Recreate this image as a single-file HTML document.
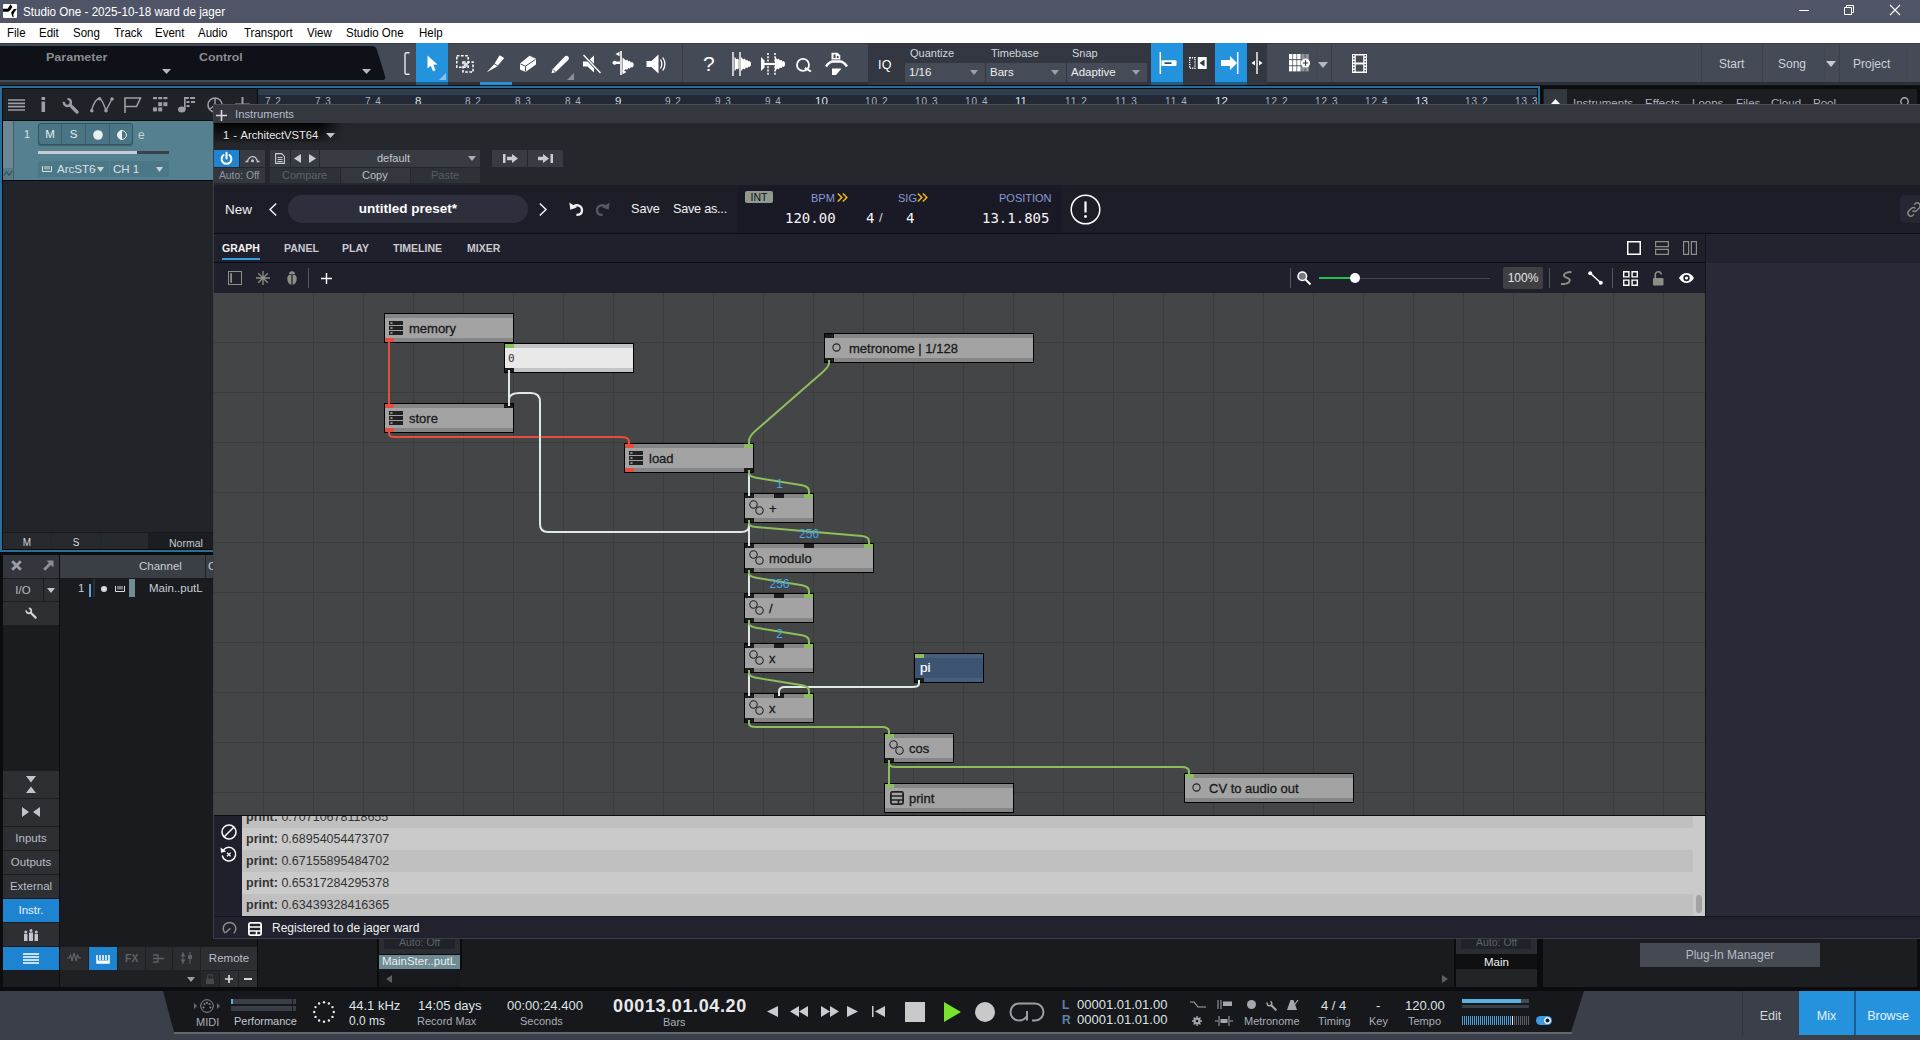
<!DOCTYPE html>
<html lang="en">
<head>
<meta charset="utf-8">
<title>Studio One - 2025-10-18 ward de jager</title>
<style>
*{box-sizing:border-box;margin:0;padding:0}
html,body{width:1920px;height:1040px;overflow:hidden;background:#191a1d;font-family:"Liberation Sans",sans-serif;font-size:12px;color:#c8ccd2}
.a{position:absolute}
.t{position:absolute;white-space:nowrap;line-height:1}
svg{position:absolute;overflow:visible}
/* ---------- window chrome ---------- */
#titlebar{left:0;top:0;width:1920px;height:23px;background:#4f5567}
#menubar{left:0;top:23px;width:1920px;height:20px;background:#fff}
#menubar .t{color:#000;font-size:12.5px;top:4px}
/* ---------- main toolbar ---------- */
#toolbar{left:0;top:43px;width:1920px;height:42px;background:#454b56;border-top:1px solid #363b44}
#understrip{left:0;top:82px;width:1920px;height:4px;background:#1b1e23}
#blueline{left:0;top:86px;width:1540px;height:3px;background:#1b6b9d}
/* ---------- arrangement ---------- */
#arr{left:0;top:89px;width:1540px;height:460px;background:#1b1e23}
#trackbar{left:3px;top:89px;width:255px;height:30px;background:#1f2227}
#ruler{left:258px;top:89px;width:1280px;height:16px;background:#27313d}
#track{left:3px;top:121px;width:211px;height:59px;background:#53808f}
/* ---------- plugin window ---------- */
#plug{left:213px;top:105px;width:1707px;height:834px;background:#24272c}
#plughead{left:0;top:0;width:1707px;height:18px;background:#34373d}
#arch{left:1px;top:80px;width:1706px;height:754px;background:#1e1e2a}
#graph{left:0;top:108px;width:1491px;height:523px;background-color:#444547;
 background-image:linear-gradient(to right,#3b3c3e 1px,transparent 1px),linear-gradient(to bottom,#3b3c3e 1px,transparent 1px);
 background-size:50px 50px;background-position:49px 49px;overflow:hidden}
/* nodes */
.n{position:absolute;height:30px;border:1px solid #000;background:linear-gradient(#868686 0 4px,#a3a3a3 4px 24px,#868686 24px 28px)}
.n .t{color:#1a1a1a;font-size:13px;top:8px;-webkit-text-stroke:.3px #1a1a1a}
.p{position:absolute;width:9px;height:4px;background:#1c1c1c}
.p.g{background:#8bbd5b}.p.r{background:#e74c3c}
.pt{top:0}.pb{top:24px}
.n.nb{background:linear-gradient(#c4c4c4 0 4px,#e9e9e9 4px 24px,#c4c4c4 24px 28px)}
.n.pi{background:linear-gradient(#465f7f 0 4px,#3c5472 4px 24px,#465f7f 24px 28px)}
.wl{width:40px;text-align:center;color:#4aa6e6;font-size:12px}
</style>
</head>
<body>
<div id="titlebar" class="a"></div>
<div id="menubar" class="a"></div>
<div id="toolbar" class="a"></div>
<div id="understrip" class="a"></div>
<div id="blueline" class="a"></div>
<div id="arr" class="a"></div>
<div id="trackbar" class="a"></div>
<div id="ruler" class="a"></div>
<div id="track" class="a"></div>
<svg style="left:3px;top:4px" width="14" height="14" viewBox="0 0 14 14"><rect x="0" y="0" width="14" height="14" rx="1" fill="#fff"/><path d="M0 4.700h4.700L7.500 0.300 9.400 3.100 7.200 6.250 5.300 7.800H0z" fill="#000"/><path d="M14 4.800l-3.400.5-2.500 3.100 1.300 4.400 1.200.6-.3-2.800 1.300-2.800z" fill="#000"/></svg>
<div class="t" style="left:23px;top:6px;font-size:12.500px;color:#fff;transform-origin:0 0;transform:scaleX(.932)">Studio One - 2025-10-18 ward de jager</div>
<svg style="left:1799px;top:10px" width="10" height="1" viewBox="0 0 10 1"><rect width="10" height="1" fill="#fff"/></svg>
<svg style="left:1844px;top:5px" width="10" height="10" viewBox="0 0 10 10"><path d="M0.500 2.500h7v7h-7zM2.500 2.500v-2h7v7h-2" fill="none" stroke="#fff" stroke-width="1"/></svg>
<svg style="left:1890px;top:5px" width="10" height="10" viewBox="0 0 10 10"><path d="M0 0l10 10M10 0L0 10" stroke="#fff" stroke-width="1.100"/></svg>
<div class="t" style="left:7px;top:27px;font-size:12.500px;color:#000;transform-origin:0 0;transform:scaleX(.92);">File</div>
<div class="t" style="left:39px;top:27px;font-size:12.500px;color:#000;transform-origin:0 0;transform:scaleX(.92);">Edit</div>
<div class="t" style="left:73px;top:27px;font-size:12.500px;color:#000;transform-origin:0 0;transform:scaleX(.92);">Song</div>
<div class="t" style="left:114px;top:27px;font-size:12.500px;color:#000;transform-origin:0 0;transform:scaleX(.92);">Track</div>
<div class="t" style="left:155px;top:27px;font-size:12.500px;color:#000;transform-origin:0 0;transform:scaleX(.92);">Event</div>
<div class="t" style="left:198px;top:27px;font-size:12.500px;color:#000;transform-origin:0 0;transform:scaleX(.92);">Audio</div>
<div class="t" style="left:244px;top:27px;font-size:12.500px;color:#000;transform-origin:0 0;transform:scaleX(.92);">Transport</div>
<div class="t" style="left:307px;top:27px;font-size:12.500px;color:#000;transform-origin:0 0;transform:scaleX(.92);">View</div>
<div class="t" style="left:346px;top:27px;font-size:12.500px;color:#000;transform-origin:0 0;transform:scaleX(.92);">Studio One</div>
<div class="t" style="left:419px;top:27px;font-size:12.500px;color:#000;transform-origin:0 0;transform:scaleX(.92);">Help</div>
<svg style="left:0px;top:46px" width="386" height="34" viewBox="0 0 386 34"><path d="M0 0H372q4 0 5 4l8 26q1 4-3 4H0z" fill="#0e1118"/></svg>
<div class="t" style="left:46px;top:52px;font-size:11.500px;font-weight:bold;color:#8a8c90;transform-origin:0 0;transform:scaleX(1.09)">Parameter</div>
<div class="t" style="left:199px;top:52px;font-size:11.500px;font-weight:bold;color:#8a8c90;transform-origin:0 0;transform:scaleX(1.07)">Control</div>
<svg style="left:162px;top:69px" width="9" height="5" viewBox="0 0 9 5"><path d="M0 0h9L4.500 5z" fill="#b3b7c0"/></svg>
<svg style="left:362px;top:69px" width="9" height="5" viewBox="0 0 9 5"><path d="M0 0h9L4.500 5z" fill="#b3b7c0"/></svg>
<div class="a" style="left:0px;top:82px;width:1920px;height:3px;background:#2c3038;"></div>
<div class="a" style="left:0px;top:85px;width:1920px;height:1px;background:#111317;"></div>
<svg style="left:404px;top:52px" width="6" height="23" viewBox="0 0 6 23"><path d="M5.500 0.800H2.500Q1 0.800 1 2.300V20.700Q1 22.200 2.500 22.200H5.500" fill="none" stroke="#e8eaee" stroke-width="1.400"/></svg>
<div class="a" style="left:416px;top:43px;width:32px;height:39px;background:#2493de;"></div>
<div class="a" style="left:416px;top:82px;width:32px;height:3px;background:#1d5f8d;"></div>
<svg style="left:427px;top:55px" width="12" height="17" viewBox="0 0 12 17"><path d="M0.500 0.500v13l3.200-2.800 2.300 5.600 2.600-1.100-2.300-5.400 4.200-.3z" fill="#fff"/></svg>
<svg style="left:439px;top:73px" width="7" height="7" viewBox="0 0 7 7"><path d="M7 0v7H0z" fill="#8fc1ea"/></svg>
<svg style="left:456px;top:55px" width="18" height="18" viewBox="0 0 18 18"><rect x="0.800" y="0.800" width="11.400" height="11.400" fill="none" stroke="#fff" stroke-width="1.500" stroke-dasharray="2.600 1.600"/><rect x="7" y="7" width="10" height="10" fill="none" stroke="#fff" stroke-width="1.500" stroke-dasharray="2.600 1.600"/><rect x="7.800" y="7.800" width="4" height="4" fill="#d9dce0"/></svg>
<svg style="left:486px;top:55px" width="19" height="18" viewBox="0 0 19 18"><path d="M13.600 0.300l4.600 2.700-6.300 7.500-3.300-2.100z" fill="#fff"/><path d="M8.200 9.250l3.300 2.050L0.700 17.200z" fill="#fff"/></svg>
<div class="a" style="left:480px;top:82px;width:32px;height:3px;background:#2493de;"></div>
<svg style="left:519px;top:55px" width="18" height="18" viewBox="0 0 18 18"><path d="M10.500 0.800l6.500 3v5.700l-10.500 7.500-5.500-2.500v-6z" fill="#fff"/><path d="M1.500 9l5 2.200 10-6.800M6.500 11.200v5.300" fill="none" stroke="#454b56" stroke-width="1"/></svg>
<svg style="left:551px;top:56px" width="18" height="18" viewBox="0 0 18 18"><path d="M13.800 0.500a2.400 2.400 0 0 1 3.400 3.400L4.500 16.200 0.500 17.300 1.600 13.300z" fill="#fff"/><path d="M2 13.500l2.600 2.600" stroke="#454b56" stroke-width="1"/></svg>
<svg style="left:567px;top:73px" width="7" height="7" viewBox="0 0 7 7"><path d="M7 0v7H0z" fill="#8a8f99"/></svg>
<svg style="left:582px;top:54px" width="19" height="20" viewBox="0 0 19 20"><path d="M1 7.500h4.500l6.500-6v17l-6.500-6H1z" fill="#fff"/><path d="M1.500 1l17 18" stroke="#454b56" stroke-width="3.200"/><path d="M1.500 1l17 18" stroke="#fff" stroke-width="1.300"/></svg>
<svg style="left:612px;top:51px" width="23" height="24" viewBox="0 0 23 24"><path d="M9 0v24" stroke="#fff" stroke-width="1.600"/><path d="M7.500 0.800v4.500l-4-2.200zM10.500 18.800v4.500l4-2.300z" fill="#fff"/><path d="M8 10.500H4.500c-1-1.200-3.500-1-4 1s2.500 3 4 1.500H8z" fill="#fff"/><path d="M10.500 6.500l3.500 3 1 -1 1.500 2 1.200-.8 1.200 1.800 1.200-.5 1.500 1.500v2.500l-1.500 1.500-1.200-.5-1.200 1.800-1.200-.8-1.500 2-1-1-3.500 3z" fill="#fff"/></svg>
<svg style="left:646px;top:54px" width="20" height="20" viewBox="0 0 20 20"><path d="M0.500 7h5l7-6.500v19l-7-6.500h-5z" fill="#fff"/><path d="M14.500 5.500c1.600 2.800 1.600 6.200 0 9M16.800 3.500c2.600 4 2.600 9 0 13" fill="none" stroke="#fff" stroke-width="1.300"/></svg>
<div class="a" style="left:682px;top:43px;width:1px;height:39px;background:#383d46;"></div>
<div class="t" style="left:703px;top:53px;font-size:21px;color:#fff">?</div>
<svg style="left:732px;top:52px" width="20" height="24" viewBox="0 0 20 24"><path d="M1 0v24M8 0v24" stroke="#fff" stroke-width="1.400"/><g transform="translate(2.500,5)"><path d="M0 0l2.500 2.500 1-1 1.500 2 1.200-.8 1.200 1.800 1.200-.5 1.400 1.500v3l-1.400 1.500-1.200-.5-1.200 1.800-1.200-.8-1.500 2-1-1L0 14z" fill="#fff"/></g><path d="M8 0v24" stroke="#454b56" stroke-width="2.600"/><path d="M8 0v24" stroke="#fff" stroke-width="1.400"/><g transform="translate(9,5)"><path d="M0 0l2.500 2.500 1-1 1.500 2 1.200-.8 1.200 1.800 1.200-.5 1.400 1.500v3l-1.400 1.500-1.200-.5-1.200 1.800-1.200-.8-1.500 2-1-1L0 14z" fill="#fff"/></g></svg>
<svg style="left:761px;top:53px" width="25" height="22" viewBox="0 0 25 22"><g transform="translate(0,4)"><path d="M0 0l3.500 3.500V10.500L0 14z" fill="#fff"/></g><g transform="translate(14,4)"><path d="M0 0l2.500 2.500 1-1 1.500 2 1.200-.8 1.200 1.800 1.200-.5 1.400 1.500v3l-1.400 1.500-1.200-.5-1.200 1.800-1.200-.8-1.500 2-1-1L0 14z" fill="#fff"/></g><path d="M7 0v22M14 0v22" stroke="#fff" stroke-width="1.500" stroke-dasharray="2 1.300"/><path d="M3 11h11" stroke="#fff" stroke-width="2.200"/></svg>
<svg style="left:796px;top:58px" width="17" height="15" viewBox="0 0 17 15"><circle cx="7" cy="6.900" r="6" fill="none" stroke="#fff" stroke-width="1.800"/><path d="M8.800 9.800l6.200 3.700" stroke="#fff" stroke-width="2"/></svg>
<svg style="left:825px;top:52px" width="24" height="24" viewBox="0 0 24 24"><path d="M6.500 0.800h6.200l2.600 2.600v4.100H6.500z" fill="#fff"/><path d="M8.500 2.500h2v3.500h-2zM11.800 4h1.700v2h-1.700z" fill="#454b56"/><path d="M1 14.500q3.500-5 7-5h7q3.500 0 7 5" fill="none" stroke="#fff" stroke-width="2.400"/><path d="M7 16.500h9.500l-5.500 6.500H7z" fill="#fff"/></svg>
<div class="a" style="left:868px;top:43px;width:283px;height:42px;background:#323741;"></div>
<div class="t" style="left:878px;top:59px;font-size:12.500px;color:#fff;letter-spacing:.3px">IQ</div>
<div class="t" style="left:910px;top:48px;font-size:11px;color:#d2d6dc">Quantize</div>
<div class="a" style="left:905px;top:63px;width:80px;height:19px;background:#464c57;"></div>
<div class="t" style="left:909px;top:67px;font-size:11.500px;color:#eceef1">1/16</div>
<svg style="left:970px;top:70px" width="8" height="5" viewBox="0 0 8 5"><path d="M0 0h8L4 5z" fill="#9ba0a9"/></svg>
<div class="t" style="left:991px;top:48px;font-size:11px;color:#d2d6dc">Timebase</div>
<div class="a" style="left:986px;top:63px;width:80px;height:19px;background:#464c57;"></div>
<div class="t" style="left:990px;top:67px;font-size:11.500px;color:#eceef1">Bars</div>
<svg style="left:1051px;top:70px" width="8" height="5" viewBox="0 0 8 5"><path d="M0 0h8L4 5z" fill="#9ba0a9"/></svg>
<div class="t" style="left:1072px;top:48px;font-size:11px;color:#d2d6dc">Snap</div>
<div class="a" style="left:1067px;top:63px;width:80px;height:19px;background:#464c57;"></div>
<div class="t" style="left:1071px;top:67px;font-size:11.500px;color:#eceef1">Adaptive</div>
<svg style="left:1132px;top:70px" width="8" height="5" viewBox="0 0 8 5"><path d="M0 0h8L4 5z" fill="#9ba0a9"/></svg>
<div class="a" style="left:1151px;top:43px;width:32px;height:39px;background:#2493de;"></div>
<div class="a" style="left:1151px;top:82px;width:32px;height:3px;background:#1d5f8d;"></div>
<div class="a" style="left:1215px;top:43px;width:32px;height:39px;background:#2493de;"></div>
<div class="a" style="left:1215px;top:82px;width:32px;height:3px;background:#1d5f8d;"></div>
<div class="a" style="left:1247px;top:43px;width:20px;height:42px;background:#323741;"></div>
<div class="a" style="left:1183px;top:43px;width:32px;height:42px;background:#323741;"></div>
<svg style="left:1159px;top:52px" width="18" height="22" viewBox="0 0 18 22"><path d="M1.300 0v22" stroke="#fff" stroke-width="1.500"/><rect x="2.500" y="8.300" width="15" height="5.700" rx="1" fill="#fff"/><rect x="5.500" y="10.300" width="7" height="1.700" fill="#14508a"/></svg>
<svg style="left:1189px;top:57px" width="18" height="12" viewBox="0 0 18 12"><rect x="0.700" y="0.700" width="5.300" height="10.600" fill="none" stroke="#fff" stroke-width="1.400" stroke-dasharray="1.200 1"/><rect x="8.800" y="0" width="8.900" height="12" fill="#fff"/><path d="M15.500 2.500v7l-5-3.500z" fill="#323741"/></svg>
<svg style="left:1221px;top:52px" width="18" height="22" viewBox="0 0 18 22"><path d="M16.700 0v22" stroke="#fff" stroke-width="1.500"/><path d="M0 8h9V4l7 7-7 7v-4H0z" fill="#fff"/></svg>
<svg style="left:1251px;top:52px" width="12" height="22" viewBox="0 0 12 22"><path d="M6 0v22" stroke="#fff" stroke-width="1.400"/><path d="M4 8.500v5L0.500 11zM8 8.500v5l3.500-2.500z" fill="#fff"/></svg>
<svg style="left:1289px;top:54px" width="22" height="18" viewBox="0 0 22 18"><rect x="0.0" y="0.0" width="3.400" height="5.200" fill="#fff"/><rect x="4.1" y="0.0" width="3.400" height="5.200" fill="#fff"/><rect x="8.2" y="0.0" width="3.400" height="5.200" fill="#fff"/><rect x="12.3" y="0.0" width="3.400" height="5.200" fill="#8f949d"/><rect x="16.4" y="0.0" width="3.400" height="5.200" fill="#8f949d"/><rect x="0.0" y="6.1" width="3.400" height="5.200" fill="#fff"/><rect x="4.1" y="6.1" width="3.400" height="5.200" fill="#fff"/><rect x="8.2" y="6.1" width="3.400" height="5.200" fill="#fff"/><rect x="12.3" y="6.1" width="3.400" height="5.200" fill="#8f949d"/><rect x="16.4" y="6.1" width="3.400" height="5.200" fill="#8f949d"/><rect x="0.0" y="12.2" width="3.400" height="5.200" fill="#fff"/><rect x="4.1" y="12.2" width="3.400" height="5.200" fill="#fff"/><rect x="8.2" y="12.2" width="3.400" height="5.200" fill="#fff"/><rect x="12.3" y="12.2" width="3.400" height="5.200" fill="#8f949d"/><rect x="16.4" y="12.2" width="3.400" height="5.200" fill="#8f949d"/><circle cx="16.500" cy="9" r="4.600" fill="#fff"/><path d="M13.800 9h5.400M16.500 6.300v5.400" stroke="#333" stroke-width="1.100"/></svg>
<div class="a" style="left:1316px;top:43px;width:1px;height:39px;background:#40454f;"></div>
<svg style="left:1318px;top:62px" width="10" height="6" viewBox="0 0 10 6"><path d="M0 0h10L5 6z" fill="#b3b7c0"/></svg>
<div class="a" style="left:1331px;top:43px;width:1px;height:39px;background:#383d46;"></div>
<svg style="left:1352px;top:54px" width="15" height="19" viewBox="0 0 15 19"><rect x="0" y="0" width="15" height="19" fill="#fff"/><rect x="3.800" y="1.500" width="7.400" height="7" fill="#454b56"/><rect x="3.800" y="10.500" width="7.400" height="7" fill="#454b56"/><path d="M1.800 1v17M13.200 1v17" stroke="#454b56" stroke-width="1.400" stroke-dasharray="1.500 1.500"/></svg>
<div class="a" style="left:1701px;top:43px;width:1px;height:39px;background:#3a3f48;"></div>
<div class="a" style="left:1762px;top:43px;width:1px;height:39px;background:#3a3f48;"></div>
<div class="a" style="left:1839px;top:43px;width:1px;height:39px;background:#3a3f48;"></div>
<div class="a" style="left:1824px;top:43px;width:1px;height:39px;background:#40454f;"></div>
<div class="a" style="left:1906px;top:43px;width:1px;height:39px;background:#40454f;"></div>
<div class="t" style="left:1719px;top:58px;font-size:12px;color:#ccd2da">Start</div>
<div class="t" style="left:1778px;top:58px;font-size:12px;color:#ccd2da">Song</div>
<svg style="left:1826px;top:61px" width="10" height="6" viewBox="0 0 10 6"><path d="M0 0h10L5 6z" fill="#c5c9d0"/></svg>
<div class="t" style="left:1853px;top:58px;font-size:12px;color:#ccd2da">Project</div>

<div class="a" style="left:0px;top:85px;width:1540px;height:468px;background:#08090a;"></div>
<div class="a" style="left:0px;top:86px;width:1540px;height:466px;background:#28709c;"></div>
<div class="a" style="left:2px;top:88px;width:1536px;height:462px;background:#08090a;"></div>
<div class="a" style="left:3px;top:89px;width:1534px;height:460px;background:#212429;"></div>
<div class="a" style="left:3px;top:89px;width:255px;height:31px;background:#1f2227;"></div>
<div class="a" style="left:3px;top:120px;width:255px;height:1px;background:#0c0d0f;"></div>
<svg style="left:8px;top:99px" width="17" height="12" viewBox="0 0 17 12"><path d="M0 1h17M0 4.300h17M0 7.700h17M0 11h17" stroke="#9b9ea4" stroke-width="1.700"/></svg>
<svg style="left:41px;top:97px" width="5" height="15" viewBox="0 0 5 15"><rect x="0.500" y="0" width="3.600" height="3" fill="#9b9ea4"/><rect x="0.500" y="4.500" width="3.600" height="10.500" fill="#9b9ea4"/></svg>
<svg style="left:62px;top:97px" width="17" height="17" viewBox="0 0 12 12"><circle cx="3.800" cy="3.800" r="2.500" fill="none" stroke="#9b9ea4" stroke-width="1.700" stroke-dasharray="8.070 3.490 4.150 0"/><path d="M5.800 5.800L10.600 10.600" stroke="#9b9ea4" stroke-width="2.300" stroke-linecap="round"/></svg>
<svg style="left:90px;top:97px" width="24" height="16" viewBox="0 0 24 16"><path d="M1.500 13.500C4 5 7 1.500 9.500 1.500c2 0 4 5 6.500 12L22 2" fill="none" stroke="#9b9ea4" stroke-width="1.500"/><circle cx="1.800" cy="13.800" r="1.800" fill="#9b9ea4"/><circle cx="9.500" cy="1.800" r="1.800" fill="#9b9ea4"/><circle cx="16" cy="13.800" r="1.800" fill="#9b9ea4"/><circle cx="22" cy="2" r="1.800" fill="#9b9ea4"/></svg>
<svg style="left:124px;top:97px" width="17" height="16" viewBox="0 0 17 16"><path d="M1 16V1h15.500l-4 8.500H1" fill="none" stroke="#9b9ea4" stroke-width="1.600"/></svg>
<svg style="left:153px;top:97px" width="15" height="15" viewBox="0 0 15 15"><rect x="0" y="0" width="4" height="2.2" fill="#9b9ea4"/><rect x="5.2" y="0" width="4" height="2.2" fill="#9b9ea4"/><rect x="10.4" y="0" width="4" height="2.2" fill="#9b9ea4"/><rect x="5.2" y="5.2" width="4" height="4" fill="#9b9ea4"/><rect x="10.4" y="5.2" width="4" height="4" fill="#9b9ea4"/><rect x="0" y="10.4" width="4" height="4" fill="#9b9ea4"/><rect x="5.2" y="10.4" width="4" height="4" fill="#9b9ea4"/></svg>
<svg style="left:178px;top:97px" width="18" height="16" viewBox="0 0 18 16"><ellipse cx="3.800" cy="12.500" rx="3.800" ry="3" fill="#9b9ea4"/><path d="M6.800 12.500V0" stroke="#9b9ea4" stroke-width="1.600"/><path d="M6.800 1h4M12 1h5M8.500 5h3M13 5h4M8.500 9h3" stroke="#9b9ea4" stroke-width="2"/></svg>
<svg style="left:207px;top:97px" width="16" height="16" viewBox="0 0 16 16"><circle cx="8" cy="8" r="7" fill="none" stroke="#9b9ea4" stroke-width="1.600"/><path d="M8 1v7l-5 4M8 8l5 4" stroke="#9b9ea4" stroke-width="1.500" fill="none"/></svg>
<svg style="left:235px;top:97px" width="15" height="15" viewBox="0 0 15 15"><path d="M7.500 0v15M0 7.500h15" stroke="#9b9ea4" stroke-width="2"/></svg>
<div class="a" style="left:257px;top:89px;width:1px;height:16px;background:#08090a;"></div>
<div class="a" style="left:258px;top:89px;width:1279px;height:6px;background:#303f4f;"></div>
<div class="a" style="left:258px;top:95px;width:1279px;height:10px;background:#232a36;"></div>
<div class="t" style="left:265px;top:97px;font-size:10px;color:#aab2bd;letter-spacing:1px">7.2</div>
<div class="t" style="left:315px;top:97px;font-size:10px;color:#aab2bd;letter-spacing:1px">7.3</div>
<div class="t" style="left:365px;top:97px;font-size:10px;color:#aab2bd;letter-spacing:1px">7.4</div>
<div class="t" style="left:415px;top:96px;font-size:11.500px;color:#dfe3e8">8</div>
<div class="t" style="left:465px;top:97px;font-size:10px;color:#aab2bd;letter-spacing:1px">8.2</div>
<div class="t" style="left:515px;top:97px;font-size:10px;color:#aab2bd;letter-spacing:1px">8.3</div>
<div class="t" style="left:565px;top:97px;font-size:10px;color:#aab2bd;letter-spacing:1px">8.4</div>
<div class="t" style="left:615px;top:96px;font-size:11.500px;color:#dfe3e8">9</div>
<div class="t" style="left:665px;top:97px;font-size:10px;color:#aab2bd;letter-spacing:1px">9.2</div>
<div class="t" style="left:715px;top:97px;font-size:10px;color:#aab2bd;letter-spacing:1px">9.3</div>
<div class="t" style="left:765px;top:97px;font-size:10px;color:#aab2bd;letter-spacing:1px">9.4</div>
<div class="t" style="left:815px;top:96px;font-size:11.500px;color:#dfe3e8">10</div>
<div class="t" style="left:865px;top:97px;font-size:10px;color:#aab2bd;letter-spacing:1px">10.2</div>
<div class="t" style="left:915px;top:97px;font-size:10px;color:#aab2bd;letter-spacing:1px">10.3</div>
<div class="t" style="left:965px;top:97px;font-size:10px;color:#aab2bd;letter-spacing:1px">10.4</div>
<div class="t" style="left:1015px;top:96px;font-size:11.500px;color:#dfe3e8">11</div>
<div class="t" style="left:1065px;top:97px;font-size:10px;color:#aab2bd;letter-spacing:1px">11.2</div>
<div class="t" style="left:1115px;top:97px;font-size:10px;color:#aab2bd;letter-spacing:1px">11.3</div>
<div class="t" style="left:1165px;top:97px;font-size:10px;color:#aab2bd;letter-spacing:1px">11.4</div>
<div class="t" style="left:1215px;top:96px;font-size:11.500px;color:#dfe3e8">12</div>
<div class="t" style="left:1265px;top:97px;font-size:10px;color:#aab2bd;letter-spacing:1px">12.2</div>
<div class="t" style="left:1315px;top:97px;font-size:10px;color:#aab2bd;letter-spacing:1px">12.3</div>
<div class="t" style="left:1365px;top:97px;font-size:10px;color:#aab2bd;letter-spacing:1px">12.4</div>
<div class="t" style="left:1415px;top:96px;font-size:11.500px;color:#dfe3e8">13</div>
<div class="t" style="left:1465px;top:97px;font-size:10px;color:#aab2bd;letter-spacing:1px">13.2</div>
<div class="t" style="left:1515px;top:97px;font-size:10px;color:#aab2bd;letter-spacing:1px">13.3</div>
<div class="a" style="left:3px;top:121px;width:211px;height:59px;background:#54808f;"></div>
<div class="a" style="left:3px;top:121px;width:10px;height:47px;background:#6c8993;"></div>
<div class="a" style="left:3px;top:168px;width:10px;height:12px;background:#587a86;"></div>
<div class="a" style="left:13px;top:121px;width:1px;height:59px;background:#3d606c;"></div>
<svg style="left:4px;top:170px" width="8" height="7" viewBox="0 0 8 7"><path d="M0 5.500L2.500 1.500 5 5.500 8 1" fill="none" stroke="#2d4650" stroke-width="1"/></svg>
<div class="t" style="left:24px;top:129px;font-size:11px;color:#d8e4e8">1</div>
<div class="a" style="left:38px;top:123px;width:95px;height:22px;background:#497584;border:1px solid #34545f;border-radius:3px;box-shadow:0 1px 1px rgba(0,0,0,.25)"></div>
<div class="a" style="left:61px;top:124px;width:1px;height:20px;background:#3a5f6b;"></div>
<div class="a" style="left:85px;top:124px;width:1px;height:20px;background:#3a5f6b;"></div>
<div class="a" style="left:109px;top:124px;width:1px;height:20px;background:#3a5f6b;"></div>
<div class="t" style="left:39px;top:129px;width:22px;text-align:center;font-size:11.500px;color:#eaf0f2">M</div>
<div class="t" style="left:62px;top:129px;width:23px;text-align:center;font-size:11.500px;color:#eaf0f2">S</div>
<svg style="left:92.5px;top:129.5px" width="10" height="10" viewBox="0 0 10 10"><circle cx="5" cy="5" r="4.800" fill="#eaf0f2"/></svg>
<svg style="left:116.5px;top:129.5px" width="10" height="10" viewBox="0 0 10 10"><circle cx="5" cy="5" r="4.400" fill="none" stroke="#eaf0f2" stroke-width="1"/><path d="M5 0.300a4.700 4.700 0 0 0 0 9.400z" fill="#eaf0f2"/></svg>
<div class="t" style="left:138px;top:129px;font-size:12px;color:#c2d4da">e</div>
<div class="a" style="left:38px;top:151px;width:131px;height:3px;background:#39414f;"></div>
<div class="a" style="left:38px;top:151px;width:99px;height:3px;background:#c6cad3;"></div>
<div class="a" style="left:3px;top:180px;width:211px;height:1px;background:#08090a;"></div>
<div class="a" style="left:38px;top:161px;width:71px;height:16px;background:#4b7787;"></div>
<div class="a" style="left:110px;top:161px;width:59px;height:16px;background:#4b7787;"></div>
<svg style="left:42px;top:166px" width="10" height="6" viewBox="0 0 10 6"><path d="M0.500 0v5.500h9V0M3 0v3.500M5 0v3.500M7 0v3.500" fill="none" stroke="#d8e2e6" stroke-width="1"/></svg>
<div class="t" style="left:57px;top:164px;font-size:11.500px;color:#d8e2e6">ArcST6</div>
<div class="t" style="left:93px;top:164px;font-size:11.500px;color:#d8e2e6">·</div>
<svg style="left:97px;top:167px" width="7" height="5" viewBox="0 0 7 5"><path d="M0 0h7L3.500 5z" fill="#c8d6db"/></svg>
<div class="t" style="left:113px;top:164px;font-size:11.500px;color:#d8e2e6">CH 1</div>
<svg style="left:156px;top:167px" width="7" height="5" viewBox="0 0 7 5"><path d="M0 0h7L3.500 5z" fill="#c8d6db"/></svg>
<div class="a" style="left:3px;top:532px;width:210px;height:1px;background:#17191d;"></div>
<div class="a" style="left:3px;top:533px;width:48px;height:16px;background:#27292d;"></div>
<div class="a" style="left:52px;top:533px;width:48px;height:16px;background:#27292d;"></div>
<div class="a" style="left:101px;top:533px;width:47px;height:16px;background:#27292d;"></div>
<div class="a" style="left:148px;top:533px;width:66px;height:16px;background:#1b1d21;"></div>
<div class="t" style="left:3px;top:538px;width:48px;text-align:center;font-size:10px;color:#d5d9df">M</div>
<div class="t" style="left:52px;top:538px;width:48px;text-align:center;font-size:10px;color:#d5d9df">S</div>
<div class="t" style="left:169px;top:538px;font-size:10.500px;color:#c5cad2">Normal</div>
<div class="a" style="left:0px;top:552px;width:1920px;height:3px;background:#0b0c0e;"></div>
<div class="a" style="left:0px;top:555px;width:1540px;height:432px;background:#1a1b1e;"></div>
<div class="a" style="left:0px;top:555px;width:3px;height:432px;background:#0b0c0e;"></div>
<div class="a" style="left:3px;top:555px;width:56px;height:432px;background:#1b1c1f;"></div>
<div class="a" style="left:59px;top:555px;width:1px;height:432px;background:#0b0c0e;"></div>
<div class="a" style="left:3px;top:555px;width:56px;height:23px;background:#33373d;"></div>
<svg style="left:11px;top:560px" width="11" height="11" viewBox="0 0 11 11"><path d="M1.200 1.200l8.600 8.600M9.800 1.200l-8.600 8.600" stroke="#9b9ea4" stroke-width="2.800"/></svg>
<svg style="left:43px;top:560px" width="11" height="11" viewBox="0 0 11 11"><path d="M3.500 0.500h7V7.500z" fill="#8c8f95"/><path d="M1.200 9.800L7.500 3.500" stroke="#8c8f95" stroke-width="3"/></svg>
<div class="a" style="left:3px;top:579px;width:40px;height:22px;background:#2d2f33;"></div>
<div class="a" style="left:44px;top:579px;width:15px;height:22px;background:#2d2f33;"></div>
<div class="t" style="left:3px;top:585px;width:40px;text-align:center;font-size:11.500px;color:#b9bec6">I/O</div>
<svg style="left:47px;top:588px" width="8" height="5" viewBox="0 0 8 5"><path d="M0 0h8L4 5z" fill="#c0c4cb"/></svg>
<div class="a" style="left:3px;top:602px;width:56px;height:23px;background:#2d2f33;"></div>
<svg style="left:25px;top:607px" width="12" height="12" viewBox="0 0 12 12"><circle cx="3.800" cy="3.800" r="2.500" fill="none" stroke="#d0d3d8" stroke-width="1.700" stroke-dasharray="8.070 3.490 4.150 0"/><path d="M5.800 5.800L10.600 10.600" stroke="#d0d3d8" stroke-width="2.300" stroke-linecap="round"/></svg>
<div class="a" style="left:60px;top:555px;width:145px;height:23px;background:#3a3e45;"></div>
<div class="a" style="left:205px;top:555px;width:1px;height:23px;background:#202226;"></div>
<div class="a" style="left:206px;top:555px;width:8px;height:23px;background:#3a3e45;"></div>
<div class="t" style="left:139px;top:561px;font-size:11.500px;color:#c8ced6">Channel</div>
<div class="t" style="left:208px;top:561px;font-size:11.500px;color:#c8ced6">C</div>
<div class="t" style="left:78px;top:583px;font-size:11.500px;color:#c8ced6">1</div>
<div class="a" style="left:89px;top:584px;width:2px;height:13px;background:#5fa8dc;"></div>
<div class="a" style="left:93px;top:579px;width:2px;height:18px;background:#2c2f34;"></div>
<svg style="left:100.5px;top:585.5px" width="6" height="6" viewBox="0 0 6 6"><circle cx="3" cy="3" r="3" fill="#d8dade"/></svg>
<svg style="left:115px;top:586px" width="10" height="6" viewBox="0 0 10 6"><path d="M0.500 0v5.500h9V0M3 0v3.500M5 0v3.500M7 0v3.500" fill="none" stroke="#d8dade" stroke-width="1"/></svg>
<div class="a" style="left:129px;top:579px;width:6px;height:18px;background:#6f8b94;"></div>
<div class="t" style="left:149px;top:583px;font-size:11.500px;color:#c8ced6">Main..putL</div>
<div class="a" style="left:3px;top:771px;width:56px;height:27px;background:#2d2f33;"></div>
<div class="a" style="left:3px;top:799px;width:56px;height:27px;background:#2d2f33;"></div>
<div class="a" style="left:3px;top:827px;width:56px;height:23px;background:#2d2f33;"></div>
<div class="a" style="left:3px;top:851px;width:56px;height:23px;background:#2d2f33;"></div>
<div class="a" style="left:3px;top:875px;width:56px;height:23px;background:#2d2f33;"></div>
<div class="a" style="left:3px;top:923px;width:56px;height:23px;background:#2d2f33;"></div>
<div class="a" style="left:3px;top:899px;width:56px;height:23px;background:#1e84d2;"></div>
<div class="a" style="left:3px;top:947px;width:56px;height:23px;background:#1e84d2;"></div>
<svg style="left:25px;top:776px" width="12" height="17" viewBox="0 0 12 17"><path d="M1 0h10L6 6.500zM1 17h10L6 10.500z" fill="#c0c4cb"/></svg>
<svg style="left:22px;top:807px" width="18" height="10" viewBox="0 0 18 10"><path d="M0 0v10l7-5zM18 0v10l-7-5z" fill="#c0c4cb"/></svg>
<div class="t" style="left:3px;top:833px;width:56px;text-align:center;font-size:11.500px;color:#b9bec6">Inputs</div>
<div class="t" style="left:3px;top:857px;width:56px;text-align:center;font-size:11.500px;color:#b9bec6">Outputs</div>
<div class="t" style="left:3px;top:881px;width:56px;text-align:center;font-size:11.500px;color:#b9bec6">External</div>
<div class="t" style="left:3px;top:905px;width:56px;text-align:center;font-size:11.500px;color:#e6f0fa">Instr.</div>
<svg style="left:24px;top:929px" width="14" height="12" viewBox="0 0 14 12"><path d="M0 5h3.500v7H0zM5 3.500h4V12H5zM10.500 5H14v7h-3.500z" fill="#c0c4cb"/><circle cx="1.750" cy="3" r="1.500" fill="#c0c4cb"/><circle cx="7" cy="1.500" r="1.500" fill="#c0c4cb"/><circle cx="12.250" cy="3" r="1.500" fill="#c0c4cb"/></svg>
<svg style="left:23px;top:953px" width="16" height="11" viewBox="0 0 16 11"><path d="M0 1h16M0 4h16M0 7h16M0 10h16" stroke="#fff" stroke-width="1.600"/></svg>
<div class="a" style="left:60px;top:947px;width:197px;height:40px;background:#1f2024;"></div>
<div class="a" style="left:60px;top:947px;width:28px;height:23px;background:#2a2c30;"></div>
<div class="a" style="left:118px;top:947px;width:27px;height:23px;background:#2a2c30;"></div>
<div class="a" style="left:146px;top:947px;width:26px;height:23px;background:#2a2c30;"></div>
<div class="a" style="left:173px;top:947px;width:27px;height:23px;background:#2a2c30;"></div>
<div class="a" style="left:201px;top:947px;width:56px;height:23px;background:#2d2f33;"></div>
<div class="a" style="left:89px;top:947px;width:28px;height:23px;background:#1e84d2;"></div>
<svg style="left:67px;top:953px" width="14" height="10" viewBox="0 0 14 10"><path d="M0 5h2l1.500-3 1.500 6 2-8 2 8 1.500-6L12 5h2" fill="none" stroke="#5d6168" stroke-width="1.200"/></svg>
<svg style="left:97px;top:955px" width="12" height="8" viewBox="0 0 12 8"><path d="M0 0v8h12V0M3 0v5M6 0v5M9 0v5" fill="none" stroke="#fff" stroke-width="1.500"/><rect x="0" y="5.500" width="12" height="2.500" fill="#fff"/></svg>
<div class="t" style="left:125px;top:953px;font-size:10.500px;color:#5d6168;font-weight:bold">FX</div>
<svg style="left:153px;top:954px" width="11" height="9" viewBox="0 0 11 9"><path d="M0 1h5v7H0M0 4.500h11" fill="none" stroke="#5d6168" stroke-width="1.300"/></svg>
<svg style="left:180px;top:952px" width="13" height="12" viewBox="0 0 13 12"><path d="M3 0v12M10 0v12" stroke="#5d6168" stroke-width="1"/><path d="M0.500 4.500L3 1l2.500 3.500zM0.500 7.500L3 11l2.500-3.500z" fill="#5d6168"/><rect x="8" y="3" width="4" height="4" rx="1" fill="#5d6168"/></svg>
<div class="t" style="left:201px;top:953px;width:56px;text-align:center;font-size:11.500px;color:#b9bec6">Remote</div>
<svg style="left:187px;top:977px" width="8" height="5" viewBox="0 0 8 5"><path d="M0 0h8L4 5z" fill="#9b9ea4"/></svg>
<div class="a" style="left:201px;top:971px;width:18px;height:16px;background:#26282c;"></div>
<div class="a" style="left:220px;top:971px;width:18px;height:16px;background:#2d2f33;"></div>
<div class="a" style="left:239px;top:971px;width:18px;height:16px;background:#2d2f33;"></div>
<svg style="left:206px;top:974px" width="8" height="10" viewBox="0 0 8 10"><path d="M1.500 4.500V3a2.500 2.500 0 0 1 5 0" fill="none" stroke="#45484e" stroke-width="1.200"/><rect x="0" y="4.500" width="8" height="5.500" fill="#45484e"/></svg>
<svg style="left:225px;top:975px" width="8" height="8" viewBox="0 0 8 8"><path d="M4 0v8M0 4h8" stroke="#d8dade" stroke-width="1.700"/></svg>
<svg style="left:244px;top:978px" width="8" height="2" viewBox="0 0 8 2"><rect width="8" height="2" fill="#d8dade"/></svg>
<div class="a" style="left:257px;top:555px;width:1px;height:432px;background:#0b0c0e;"></div>
<div class="a" style="left:377px;top:939px;width:2px;height:48px;background:#0b0c0e;"></div>
<div class="a" style="left:379px;top:939px;width:81px;height:48px;background:#18191c;"></div>
<div class="a" style="left:379px;top:939px;width:81px;height:15px;background:#2a2e33;"></div>
<div class="a" style="left:384px;top:936px;width:71px;height:13px;background:#1f2226;border-radius:2px"></div>
<div class="t" style="left:399px;top:937px;font-size:10.500px;color:#5d636c">Auto: Off</div>
<div class="a" style="left:379px;top:954px;width:81px;height:1px;background:#0b0c0e;"></div>
<div class="a" style="left:379px;top:955px;width:81px;height:14px;background:#6f8b94;"></div>
<div class="t" style="left:382px;top:956px;font-size:11.500px;color:#e8eef0">MainSter..putL</div>
<div class="a" style="left:460px;top:939px;width:2px;height:31px;background:#0b0c0e;"></div>
<svg style="left:386px;top:975px" width="6" height="8" viewBox="0 0 6 8"><path d="M6 0v8L0 4z" fill="#5b5f66"/></svg>
<svg style="left:1442px;top:975px" width="6" height="8" viewBox="0 0 6 8"><path d="M0 0v8l6-4z" fill="#5b5f66"/></svg>
<div class="a" style="left:1454px;top:939px;width:2px;height:48px;background:#0b0c0e;"></div>
<div class="a" style="left:1456px;top:939px;width:81px;height:48px;background:#222528;"></div>
<div class="a" style="left:1456px;top:939px;width:81px;height:15px;background:#2a2e33;"></div>
<div class="a" style="left:1461px;top:936px;width:70px;height:13px;background:#1f2226;border-radius:2px"></div>
<div class="t" style="left:1476px;top:937px;font-size:10.500px;color:#5d636c">Auto: Off</div>
<div class="a" style="left:1456px;top:954px;width:81px;height:15px;background:#0f1012;"></div>
<div class="t" style="left:1456px;top:957px;width:81px;text-align:center;font-size:11.500px;color:#f2f2f2">Main</div>
<div class="a" style="left:1540px;top:86px;width:3px;height:901px;background:#0b0c0e;"></div>
<div class="a" style="left:1537px;top:552px;width:3px;height:435px;background:#0b0c0e;"></div>
<div class="a" style="left:1543px;top:89px;width:374px;height:898px;background:#1c1d20;"></div>
<div class="a" style="left:1917px;top:86px;width:3px;height:901px;background:#0b0c0e;"></div>
<div class="a" style="left:1540px;top:86px;width:380px;height:3px;background:#0b0c0e;"></div>
<div class="a" style="left:1544px;top:89px;width:23px;height:16px;background:#33373e;"></div>
<svg style="left:1551px;top:99px" width="9" height="5" viewBox="0 0 9 5"><path d="M0 5h9L4.500 0z" fill="#fff"/></svg>
<div class="t" style="left:1573px;top:98px;font-size:11.500px;color:#aab1bb">Instruments</div>
<div class="t" style="left:1645px;top:98px;font-size:11.500px;color:#aab1bb">Effects</div>
<div class="t" style="left:1692px;top:98px;font-size:11.500px;color:#aab1bb">Loops</div>
<div class="t" style="left:1736px;top:98px;font-size:11.500px;color:#aab1bb">Files</div>
<div class="t" style="left:1771px;top:98px;font-size:11.500px;color:#aab1bb">Cloud</div>
<div class="t" style="left:1813px;top:98px;font-size:11.500px;color:#aab1bb">Pool</div>
<svg style="left:1900px;top:97px" width="10" height="10" viewBox="0 0 10 10"><circle cx="4.500" cy="4.500" r="3.700" fill="none" stroke="#aab1bb" stroke-width="1.400"/></svg>
<div class="a" style="left:1640px;top:943px;width:180px;height:24px;background:#454a52;"></div>
<div class="t" style="left:1640px;top:949px;width:180px;text-align:center;font-size:12px;color:#b4bac3">Plug-In Manager</div>
<div class="a" style="left:0px;top:987px;width:1920px;height:4px;background:#0b0c0e;"></div>

<!--BOTTOM-->
<div id="plug" class="a">
 <div id="plughead" class="a"></div>
 
 <div class="a" style="left:0;top:-1px;width:1707px;height:1px;background:#4a4f58"></div>
 <div class="a" style="left:0;top:0;width:1px;height:834px;background:#3c3f45"></div>
 <svg style="left:3px;top:5px" width="11" height="11" viewBox="0 0 11 11"><path d="M5.5 0v11M0 5.500h11" stroke="#d6d9de" stroke-width="1.6" fill="none"/></svg>
 <div class="t" style="left:22px;top:4px;font-size:11.300px;color:#b4bbc6">Instruments</div>
 <div class="a" style="left:1px;top:18px;width:131px;height:21px;background:linear-gradient(to right,rgba(0,0,0,0) 0,rgba(0,0,0,0) 80%,#24272c 100%),linear-gradient(#000 0,#0d0e10 30%,#1b1d21 80%,#24272c 100%)"></div>
 <div class="t" style="left:10px;top:25px;font-size:11.200px;color:#ececec;text-shadow:0 1px 1px #000;word-spacing:1px">1 - ArchitectVST64</div>
 <svg style="left:113px;top:28px" width="9" height="5"><path d="M0 0h9L4.500 5z" fill="#c0c4cb"/></svg>
 <!-- row 1 -->
 <div class="a" style="left:1px;top:45px;width:25px;height:17px;background:#1e84d2"></div>
 <svg style="left:7px;top:47px" width="13" height="13" viewBox="0 0 13 13"><path d="M3.600 3A4.900 4.900 0 1 0 9.400 3M6.500 0.800v5.700" stroke="#fff" stroke-width="2" fill="none" stroke-linecap="round"/></svg>
 <div class="a" style="left:27px;top:45px;width:25px;height:17px;background:#383c42"></div>
 <svg style="left:32px;top:49px" width="15" height="9" viewBox="0 0 15 9"><path d="M0.500 7.500h2.200A4.800 4.800 0 0 1 12.300 7.500h2.200" stroke="#c9cdd3" stroke-width="1.300" fill="none"/><circle cx="7.500" cy="6.800" r="1.500" fill="#c9cdd3"/></svg>
 <div class="a" style="left:57px;top:45px;width:20px;height:17px;background:#383c42"></div>
 <svg style="left:62px;top:48px" width="10" height="11" viewBox="0 0 10 11"><path d="M0.600 0.600h6l2.800 2.800v7h-8.800zM2.500 4.500h5M2.500 6.500h5M2.500 8.500h5" stroke="#c9cdd3" stroke-width="1.100" fill="none"/></svg>
 <div class="a" style="left:78px;top:45px;width:28px;height:17px;background:#383c42"></div>
 <svg style="left:81px;top:49px" width="22" height="9" viewBox="0 0 22 9"><path d="M7 0v9L0 4.500zM15 0v9l7-4.500z" fill="#c9cdd3"/></svg>
 <div class="a" style="left:107px;top:45px;width:160px;height:17px;background:#383c42"></div>
 <div class="t" style="left:164px;top:48px;font-size:11px;color:#c3c8cf">default</div>
 <svg style="left:255px;top:51px" width="8" height="5"><path d="M0 0h8L4 5z" fill="#a9aeb6"/></svg>
 <div class="a" style="left:279px;top:45px;width:35px;height:17px;background:#383c42"></div>
 <svg style="left:290px;top:49px" width="15" height="9" viewBox="0 0 15 9"><path d="M0 0h2.500v9H0zM4 2.800h5V0l6 4.500-6 4.500V6.200H4z" fill="#c9cdd3"/></svg>
 <div class="a" style="left:315px;top:45px;width:35px;height:17px;background:#383c42"></div>
 <svg style="left:325px;top:49px" width="15" height="9" viewBox="0 0 15 9"><path d="M12.500 0H15v9h-2.500zM0 2.800h5V0l6 4.500-6 4.500V6.200H0z" fill="#c9cdd3"/></svg>
 <!-- row 2 -->
 <div class="a" style="left:1px;top:63px;width:51px;height:15px;background:#34383e"></div>
 <div class="t" style="left:6px;top:66px;font-size:10.300px;color:#8f97a3">Auto: Off</div>
 <div class="a" style="left:57px;top:63px;width:70px;height:15px;background:#2e3237"></div>
 <div class="t" style="left:69px;top:65px;font-size:11px;color:#5b626d">Compare</div>
 <div class="a" style="left:128px;top:63px;width:69px;height:15px;background:#34383e"></div>
 <div class="t" style="left:149px;top:65px;font-size:11px;color:#b9bfc8">Copy</div>
 <div class="a" style="left:198px;top:63px;width:69px;height:15px;background:#2e3237"></div>
 <div class="t" style="left:218px;top:65px;font-size:11px;color:#555c66">Paste</div>
<!--PLUGHEAD-->
 <div id="arch" class="a">
  
  <div class="a" style="left:0;top:0;width:1706px;height:48px;background:#1d1d28"></div>
  <div class="a" style="left:523px;top:0;width:325px;height:48px;background:#1a1a26"></div>
  <div class="a" style="left:0;top:48px;width:1706px;height:1px;background:#0c0c10"></div>
  <div class="a" style="left:0;top:49px;width:1491px;height:28px;background:#1f202b"></div>
  <div class="a" style="left:0;top:77px;width:1491px;height:1px;background:#0c0c10"></div>
  <div class="a" style="left:0;top:78px;width:1491px;height:30px;background:#1f202b"></div>
  <div class="a" style="left:1491px;top:49px;width:1px;height:705px;background:#15151c"></div>
  <div class="a" style="left:1492px;top:49px;width:214px;height:682px;background:#282a37"></div>
  <div class="a" style="left:1492px;top:49px;width:214px;height:29px;background:#22232e"></div>
  <div class="t" style="left:11px;top:18px;font-size:13.5px;color:#f0f0f0">New</div>
  <svg style="left:55px;top:18px" width="8" height="13" viewBox="0 0 8 13"><path d="M7.200 0.500L1 6.500l6.200 6" stroke="#f0f0f0" stroke-width="1.500" fill="none"/></svg>
  <div class="a" style="left:74px;top:10px;width:240px;height:28px;border-radius:14px;background:#2e2f3d"></div>
  <div class="t" style="left:74px;top:17px;width:240px;text-align:center;font-size:13.5px;font-weight:bold;color:#fff">untitled preset*</div>
  <svg style="left:325px;top:18px" width="8" height="13" viewBox="0 0 8 13"><path d="M0.800 0.500L7 6.500l-6.200 6" stroke="#f0f0f0" stroke-width="1.500" fill="none"/></svg>
  <svg style="left:355px;top:17px" width="15" height="14" viewBox="0 0 15 14"><path d="M0.400 0.600l0.900 7.200 6.600-2.400z" fill="#f0f0f0"/><path d="M4.600 4.400C8.400 1.800 13 4.200 13 8.200 13 11 10.800 12.900 7.400 12.900" fill="none" stroke="#f0f0f0" stroke-width="2.300"/></svg>
  <svg style="left:381px;top:17px" width="15" height="14" viewBox="0 0 15 14"><g transform="translate(15,0) scale(-1,1)"><path d="M0.400 0.600l0.900 7.200 6.600-2.400z" fill="#55565f"/><path d="M4.600 4.400C8.400 1.800 13 4.200 13 8.200 13 11 10.800 12.900 7.400 12.900" fill="none" stroke="#55565f" stroke-width="2.300"/></g></svg>
  <div class="t" style="left:417px;top:18px;font-size:12.700px;color:#f0f0f0">Save</div>
  <div class="t" style="left:459px;top:18px;font-size:12.700px;letter-spacing:-.25px;color:#f0f0f0">Save as...</div>
  <div class="a" style="left:531px;top:6px;width:28px;height:12px;border-radius:2px;background:#8f9a8f"></div>
  <div class="t" style="left:531px;top:7px;width:28px;text-align:center;font-size:10.5px;color:#111">INT</div>
  <div class="t" style="left:597px;top:8px;font-size:11px;color:#8b9bd8">BPM</div>
  <svg style="left:623px;top:8px" width="11" height="9" viewBox="0 0 11 9"><path d="M0.800 0.500l4 4-4 4M5.800 0.500l4 4-4 4" stroke="#eab71f" stroke-width="1.600" fill="none"/></svg>
  <div class="t" style="left:571px;top:26px;font:14px 'DejaVu Sans Mono','Liberation Mono',monospace;color:#f4f4f4;line-height:1">120.00</div>
  <div class="t" style="left:684px;top:8px;font-size:11px;color:#8b9bd8">SIG</div>
  <svg style="left:703px;top:8px" width="11" height="9" viewBox="0 0 11 9"><path d="M0.800 0.500l4 4-4 4M5.800 0.500l4 4-4 4" stroke="#eab71f" stroke-width="1.600" fill="none"/></svg>
  <div class="t" style="left:652px;top:26px;font:14px 'DejaVu Sans Mono','Liberation Mono',monospace;color:#f4f4f4;line-height:1">4</div>
  <div class="t" style="left:665px;top:26px;font:13px 'Liberation Sans',sans-serif;color:#d8d8d8;line-height:1">/</div>
  <div class="t" style="left:692px;top:26px;font:14px 'DejaVu Sans Mono','Liberation Mono',monospace;color:#f4f4f4;line-height:1">4</div>
  <div class="t" style="left:785px;top:8px;font-size:11px;color:#8b9bd8">POSITION</div>
  <div class="t" style="left:768px;top:26px;font:14px 'DejaVu Sans Mono','Liberation Mono',monospace;color:#f4f4f4;line-height:1">13.1.805</div>
  <svg style="left:856px;top:9px" width="31" height="31" viewBox="0 0 31 31"><circle cx="15.500" cy="15.500" r="14.300" stroke="#fff" stroke-width="1.500" fill="none"/><path d="M15.500 7.500v11" stroke="#fff" stroke-width="2.200"/><circle cx="15.500" cy="22.500" r="1.400" fill="#fff"/></svg>
  <div class="a" style="left:1686px;top:10px;width:30px;height:28px;border-radius:5px;background:#262734"></div>
  <svg style="left:1693px;top:18px" width="14" height="13" viewBox="0 0 14 13"><path d="M5.500 7.500a3 3 0 0 0 4.200 0l2.800-2.800a3 3 0 0 0-4.200-4.200l-1.200 1.200M8.500 5.500a3 3 0 0 0-4.200 0l-2.800 2.800a3 3 0 0 0 4.200 4.200l1.200-1.200" stroke="#8a8f86" stroke-width="1.400" fill="none"/></svg>
  <!-- tabs -->
  <div class="t" style="left:8px;top:58px;font-size:10.5px;font-weight:bold;color:#f2f2f2">GRAPH</div>
  <div class="a" style="left:8px;top:73px;width:38px;height:1.500px;background:#3d9be4"></div>
  <div class="t" style="left:70px;top:58px;font-size:10.5px;font-weight:bold;color:#c9c9cf">PANEL</div>
  <div class="t" style="left:128px;top:58px;font-size:10.5px;font-weight:bold;color:#c9c9cf">PLAY</div>
  <div class="t" style="left:179px;top:58px;font-size:10.5px;font-weight:bold;color:#c9c9cf">TIMELINE</div>
  <div class="t" style="left:253px;top:58px;font-size:10.5px;font-weight:bold;color:#c9c9cf">MIXER</div>

  <!-- graph toolbar -->
  <svg style="left:14px;top:86px" width="14" height="14" viewBox="0 0 14 14"><rect x="0.500" y="0.500" width="13" height="13" fill="none" stroke="#8b9087" stroke-width="1"/><rect x="2.200" y="2.200" width="1.800" height="9.600" fill="#8b9087"/></svg>
  <svg style="left:42px;top:86px" width="14" height="14" viewBox="0 0 14 14"><path d="M7 0v14M0 7h14M2.200 2.200l9.600 9.600M11.800 2.200l-9.600 9.600" stroke="#8b9087" stroke-width="1.300"/></svg>
  <svg style="left:72.5px;top:86px" width="10" height="14" viewBox="0 0 10 14"><path d="M2 3.200a3 3 0 0 1 6 0zM0.300 7.500c0-2 .8-3.200 1.700-3.600h2.400v9.900C1.800 13.500.3 11 .3 7.500zM9.700 7.500c0-2-.8-3.200-1.700-3.600H5.600v9.900c2.600-.3 4.100-2.800 4.100-6.300z" fill="#8b9087"/></svg>
  <div class="a" style="left:94px;top:83px;width:1px;height:20px;background:#55575c"></div>
  <svg style="left:107px;top:88px" width="11" height="11" viewBox="0 0 11 11"><path d="M5.500 0v11M0 5.500h11" stroke="#fff" stroke-width="1.400"/></svg>
  <div class="a" style="left:1076px;top:83px;width:1px;height:20px;background:#55575c"></div>
  <svg style="left:1083px;top:86px" width="14" height="14" viewBox="0 0 14 14"><circle cx="5.300" cy="5.300" r="4.300" fill="#77797c" stroke="#fff" stroke-width="1.500"/><path d="M8.500 8.500l5 5" stroke="#fff" stroke-width="2"/></svg>
  <div class="a" style="left:1105px;top:92.5px;width:171px;height:1px;background:#46474c"></div>
  <div class="a" style="left:1105px;top:92px;width:36px;height:2px;background:#1fc24f"></div>
  <div class="a" style="left:1136px;top:88px;width:10px;height:10px;border-radius:5px;background:#fff"></div>
  <div class="a" style="left:1289px;top:82px;width:40px;height:22px;border-radius:2px;background:#404043"></div>
  <div class="t" style="left:1289px;top:87px;width:40px;text-align:center;font-size:12px;color:#e4e4e4">100%</div>
  <div class="a" style="left:1335px;top:83px;width:1px;height:20px;background:#55575c"></div>
  <svg style="left:1346px;top:86px" width="13" height="14" viewBox="0 0 13 14"><path d="M11.500 1C7 .8 3.500 2.600 4 4.800 4.600 7.400 10 6.500 9.800 9.400 9.600 12 5.500 13.400 1 13" stroke="#8b9087" stroke-width="1.900" fill="none"/></svg>
  <svg style="left:1374px;top:86px" width="15" height="14" viewBox="0 0 15 14"><path d="M2 2l11 10" stroke="#fff" stroke-width="1.500"/><circle cx="2.200" cy="2.200" r="2" fill="#fff"/><circle cx="12.800" cy="11.800" r="2" fill="#fff"/></svg>
  <div class="a" style="left:1398px;top:83px;width:1px;height:20px;background:#55575c"></div>
  <svg style="left:1408.5px;top:85.5px" width="15" height="15" viewBox="0 0 15 15"><path d="M0.700 0.700h5.200v5.200H0.700zM9.100 0.700h5.200v5.200H9.100zM0.700 9.100h5.200v5.200H0.700zM9.100 9.100h5.200v5.200H9.100z" stroke="#fff" stroke-width="1.400" fill="none"/></svg>
  <svg style="left:1438.5px;top:85.5px" width="11" height="15" viewBox="0 0 11 15"><path d="M2.300 7V4a3 3 0 0 1 6-.5" stroke="#8b9087" stroke-width="1.600" fill="none"/><rect x="0" y="7" width="10.500" height="7.500" rx="1" fill="#8b9087"/></svg>
  <svg style="left:1464.5px;top:88px" width="15" height="10" viewBox="0 0 15 10"><path d="M0 5C2 1.500 4.700 0 7.500 0S13 1.500 15 5c-2 3.500-4.700 5-7.500 5S2 8.500 0 5z" fill="#fff"/><circle cx="7.500" cy="5" r="3.200" fill="#1f202b"/><circle cx="7.500" cy="5" r="1.600" fill="#fff"/></svg>
  <!-- layout icons -->
  <svg style="left:1413px;top:56px" width="14" height="14" viewBox="0 0 14 14"><rect x="0.750" y="0.750" width="12.500" height="12.500" fill="none" stroke="#fff" stroke-width="1.500"/></svg>
  <svg style="left:1441px;top:56px" width="14" height="14" viewBox="0 0 14 14"><path d="M0.600 0.600h12.800v5H0.600zM0.600 8.400h12.800v5H0.600z" fill="none" stroke="#8b9087" stroke-width="1.200"/></svg>
  <svg style="left:1469px;top:56px" width="14" height="14" viewBox="0 0 14 14"><path d="M0.600 0.600h5v12.800h-5zM8.400 0.600h5v12.800h-5z" fill="none" stroke="#8b9087" stroke-width="1.200"/></svg>
<!--ARCHTOP-->
  <div id="graph" class="a">
  <div class="n" style="left:170px;top:20px;width:130px"><i class="p pb r" style="left:0px;width:9px"></i><svg style="left:4px;top:7px" width="14" height="14" viewBox="0 0 14 14"><path d="M0 0h14v4H0zM0 5h14v4H0zM0 10h14v4H0z" fill="#222"/><path d="M1.500 1.200h2v1.600h-2zM1.500 6.200h2v1.600h-2zM1.500 11.200h2v1.600h-2z" fill="#b9b9b9"/></svg><div class="t" style="left:24px;">memory</div></div>
<div class="n" style="left:170px;top:110px;width:130px"><i class="p pt r" style="left:0px;width:9px"></i><i class="p pt " style="left:119px;width:9px"></i><i class="p pb r" style="left:0px;width:9px"></i><svg style="left:4px;top:7px" width="14" height="14" viewBox="0 0 14 14"><path d="M0 0h14v4H0zM0 5h14v4H0zM0 10h14v4H0z" fill="#222"/><path d="M1.500 1.200h2v1.600h-2zM1.500 6.200h2v1.600h-2zM1.500 11.200h2v1.600h-2z" fill="#b9b9b9"/></svg><div class="t" style="left:24px;">store</div></div>
<div class="n" style="left:410px;top:150px;width:130px"><i class="p pt r" style="left:0px;width:9px"></i><i class="p pt g" style="left:119px;width:9px"></i><i class="p pb r" style="left:0px;width:9px"></i><i class="p pb " style="left:119px;width:9px"></i><svg style="left:4px;top:7px" width="14" height="14" viewBox="0 0 14 14"><path d="M0 0h14v4H0zM0 5h14v4H0zM0 10h14v4H0z" fill="#222"/><path d="M1.500 1.200h2v1.600h-2zM1.500 6.200h2v1.600h-2zM1.500 11.200h2v1.600h-2z" fill="#b9b9b9"/></svg><div class="t" style="left:24px;">load</div></div>
<div class="n" style="left:610px;top:40px;width:210px"><i class="p pt " style="left:0px;width:9px"></i><i class="p pb " style="left:0px;width:9px"></i><svg style="left:7px;top:9px" width="9" height="9" viewBox="0 0 9 9"><circle cx="4.500" cy="4.500" r="3.600" fill="none" stroke="#222" stroke-width="1.100"/></svg><div class="t" style="left:24px;">metronome | 1/128</div></div>
<div class="n" style="left:530px;top:200px;width:70px"><i class="p pt " style="left:0px;width:9px"></i><i class="p pt " style="left:29px;width:10px"></i><i class="p pt g" style="left:59px;width:9px"></i><i class="p pb " style="left:0px;width:9px"></i><svg style="left:4px;top:6px" width="15" height="15" viewBox="0 0 15 15"><circle cx="4.500" cy="4.500" r="3.700" fill="none" stroke="#222" stroke-width="1.100"/><circle cx="10.500" cy="10.500" r="3.700" fill="none" stroke="#222" stroke-width="1.100"/></svg><div class="t" style="left:24px;">+</div></div>
<div class="n" style="left:530px;top:250px;width:130px"><i class="p pt " style="left:0px;width:9px"></i><i class="p pt " style="left:59px;width:10px"></i><i class="p pt g" style="left:119px;width:9px"></i><i class="p pb " style="left:0px;width:9px"></i><svg style="left:4px;top:6px" width="15" height="15" viewBox="0 0 15 15"><circle cx="4.500" cy="4.500" r="3.700" fill="none" stroke="#222" stroke-width="1.100"/><circle cx="10.500" cy="10.500" r="3.700" fill="none" stroke="#222" stroke-width="1.100"/></svg><div class="t" style="left:24px;">modulo</div></div>
<div class="n" style="left:530px;top:300px;width:70px"><i class="p pt " style="left:0px;width:9px"></i><i class="p pt " style="left:29px;width:10px"></i><i class="p pt g" style="left:59px;width:9px"></i><i class="p pb " style="left:0px;width:9px"></i><svg style="left:4px;top:6px" width="15" height="15" viewBox="0 0 15 15"><circle cx="4.500" cy="4.500" r="3.700" fill="none" stroke="#222" stroke-width="1.100"/><circle cx="10.500" cy="10.500" r="3.700" fill="none" stroke="#222" stroke-width="1.100"/></svg><div class="t" style="left:24px;">/</div></div>
<div class="n" style="left:530px;top:350px;width:70px"><i class="p pt " style="left:0px;width:9px"></i><i class="p pt " style="left:29px;width:10px"></i><i class="p pt g" style="left:59px;width:9px"></i><i class="p pb " style="left:0px;width:9px"></i><svg style="left:4px;top:6px" width="15" height="15" viewBox="0 0 15 15"><circle cx="4.500" cy="4.500" r="3.700" fill="none" stroke="#222" stroke-width="1.100"/><circle cx="10.500" cy="10.500" r="3.700" fill="none" stroke="#222" stroke-width="1.100"/></svg><div class="t" style="left:24px;">x</div></div>
<div class="n" style="left:530px;top:400px;width:70px"><i class="p pt " style="left:0px;width:9px"></i><i class="p pt " style="left:29px;width:10px"></i><i class="p pt g" style="left:59px;width:9px"></i><i class="p pb " style="left:0px;width:9px"></i><svg style="left:4px;top:6px" width="15" height="15" viewBox="0 0 15 15"><circle cx="4.500" cy="4.500" r="3.700" fill="none" stroke="#222" stroke-width="1.100"/><circle cx="10.500" cy="10.500" r="3.700" fill="none" stroke="#222" stroke-width="1.100"/></svg><div class="t" style="left:24px;">x</div></div>
<div class="n" style="left:670px;top:440px;width:70px"><i class="p pt g" style="left:0px;width:9px"></i><i class="p pb " style="left:0px;width:9px"></i><svg style="left:4px;top:6px" width="15" height="15" viewBox="0 0 15 15"><circle cx="4.500" cy="4.500" r="3.700" fill="none" stroke="#222" stroke-width="1.100"/><circle cx="10.500" cy="10.500" r="3.700" fill="none" stroke="#222" stroke-width="1.100"/></svg><div class="t" style="left:24px;">cos</div></div>
<div class="n" style="left:670px;top:490px;width:130px"><i class="p pt g" style="left:0px;width:9px"></i><svg style="left:5px;top:7px" width="14" height="14" viewBox="0 0 14 14"><rect x="0.900" y="0.900" width="12.200" height="12.200" rx="1.500" fill="none" stroke="#222" stroke-width="1.800"/><path d="M1 5h12M1 9h12M8.500 9v4" stroke="#222" stroke-width="1.600"/></svg><div class="t" style="left:24px;">print</div></div>
<div class="n" style="left:970px;top:480px;width:170px"><i class="p pt g" style="left:0px;width:9px"></i><svg style="left:7px;top:9px" width="9" height="9" viewBox="0 0 9 9"><circle cx="4.500" cy="4.500" r="3.600" fill="none" stroke="#222" stroke-width="1.100"/></svg><div class="t" style="left:24px;">CV to audio out</div></div>
<div class="n nb" style="left:290px;top:50px;width:130px"><i class="p pt g" style="left:0;width:9px"></i><i class="p pb" style="left:0;width:9px"></i><div class="t" style="left:3px;top:9px;font:11px 'DejaVu Sans Mono','Liberation Mono',monospace;line-height:1;color:#333;-webkit-text-stroke:0">0</div></div>
<div class="n pi" style="left:700px;top:360px;width:70px"><i class="p pt g" style="left:0;width:9px"></i><i class="p pb" style="left:0;width:9px"></i><div class="t" style="left:5px;top:7px;color:#fff;font-size:13.500px;-webkit-text-stroke:.2px #fff">pi</div></div>
<svg style="left:0;top:0" width="1491" height="522" fill="none" stroke-width="2"><path d="M175 47L175 113" stroke="#e74c3c"/><path d="M175 137L175.0 140.5Q175 144 181.0 144.0L407.0 144.0Q415 144 415.0 148.5L415 153" stroke="#e74c3c"/><path d="M295 77L295 113" stroke="#dfe9e6"/><path d="M535 227L535.0 233.0Q535 239 527.0 239.0L334.0 239.0Q326 239 326.0 231.0L326.0 109.0Q326 100 317.0 100.0L306.0 100.0Q295 100 295.0 106.5L295 113" stroke="#dfe9e6"/><path d="M535 177L535 203" stroke="#dfe9e6"/><path d="M535 227L535 253" stroke="#dfe9e6"/><path d="M535 277L535 303" stroke="#dfe9e6"/><path d="M535 327L535 353" stroke="#dfe9e6"/><path d="M535 377L535 403" stroke="#dfe9e6"/><path d="M705 387L705.0 390.5Q705 394 698.0 394.0L571.0 394.0Q565 394 565.0 398.5L565 403" stroke="#dfe9e6"/><path d="M615 67L615.0 70.25Q615 73.5 608.23 79.43L541.77 137.57Q535 143.5 535.0 148.25L535 153" stroke="#8cbe5c"/><path d="M535 177L535.0 180.25Q535 183.5 541.9 184.65L588.1 192.35Q595 193.5 595.0 198.25L595 203" stroke="#8cbe5c"/><path d="M535 227L535.0 230.25Q535 233.5 541.98 234.08L648.02 242.92Q655 243.5 655.0 248.25L655 253" stroke="#8cbe5c"/><path d="M535 277L535.0 280.25Q535 283.5 541.9 284.65L588.1 292.35Q595 293.5 595.0 298.25L595 303" stroke="#8cbe5c"/><path d="M535 327L535.0 330.25Q535 333.5 541.9 334.65L588.1 342.35Q595 343.5 595.0 348.25L595 353" stroke="#8cbe5c"/><path d="M535 377L535.0 380.25Q535 383.5 541.9 384.65L588.1 392.35Q595 393.5 595.0 398.25L595 403" stroke="#8cbe5c"/><path d="M535 427L535.0 430.5Q535 434 542.0 434.0L668.0 434.0Q675 434 675.0 438.5L675 443" stroke="#8cbe5c"/><path d="M675 467L675 493" stroke="#8cbe5c"/><path d="M675 467L675.0 470.5Q675 474 682.0 474.0L968.0 474.0Q975 474 975.0 478.5L975 483" stroke="#8cbe5c"/></svg>
<div class="t wl" style="left:545.5px;top:184.5px">1</div><div class="t wl" style="left:575px;top:234.5px">256</div><div class="t wl" style="left:545.5px;top:284.5px">256</div><div class="t wl" style="left:545.5px;top:334.5px">2</div>
  </div>
  <div class="a" style="left:0;top:630px;width:1491px;height:1px;background:#0c0c10"></div>
<div class="a" style="left:0;top:631px;width:28px;height:100px;background:#1f202b"></div>
<div class="a" id="console" style="left:28px;top:631px;width:1463px;height:100px;background:#cacaca;overflow:hidden">
 <div class="a" style="left:0;top:-10px;width:1451px;height:22px;background:#c0c0c0"><div class="t" style="left:4px;top:5px;font-size:12.500px;color:#333"><b>print:</b> 0.70710678118655</div></div>
 <div class="a" style="left:0;top:12px;width:1451px;height:22px;background:#cacaca"><div class="t" style="left:4px;top:5px;font-size:12.500px;color:#333"><b>print:</b> 0.68954054473707</div></div>
 <div class="a" style="left:0;top:34px;width:1451px;height:22px;background:#c0c0c0"><div class="t" style="left:4px;top:5px;font-size:12.500px;color:#333"><b>print:</b> 0.67155895484702</div></div>
 <div class="a" style="left:0;top:56px;width:1451px;height:22px;background:#cacaca"><div class="t" style="left:4px;top:5px;font-size:12.500px;color:#333"><b>print:</b> 0.65317284295378</div></div>
 <div class="a" style="left:0;top:78px;width:1451px;height:22px;background:#c0c0c0"><div class="t" style="left:4px;top:5px;font-size:12.500px;color:#333"><b>print:</b> 0.63439328416365</div></div>
 <div class="a" style="left:1454px;top:79px;width:6px;height:18px;border-radius:3px;background:#a2a2a2"></div>
</div>
<svg style="left:7px;top:638.5px" width="16" height="16" viewBox="0 0 16 16"><circle cx="8" cy="8" r="7" fill="none" stroke="#fff" stroke-width="1.500"/><path d="M3.200 12.800L12.800 3.200" stroke="#fff" stroke-width="1.500"/></svg>
<svg style="left:6px;top:661px" width="17" height="17" viewBox="0 0 17 17"><path d="M3.300 4.200A6.800 6.800 0 1 1 2.200 9.500" fill="none" stroke="#fff" stroke-width="1.500"/><path d="M0.500 1.500l.6 5.200 5-1.300z" fill="#fff"/><path d="M7 6.800l3.600 3.600M10.600 6.800L7 10.400" stroke="#fff" stroke-width="1.300"/></svg>
<div class="a" style="left:0;top:731px;width:1706px;height:23px;background:#21222d;border-top:1px solid #14141b;border-bottom:1px solid #3a3c48"></div>
<svg style="left:7.5px;top:736px" width="15" height="15" viewBox="0 0 15 15"><path d="M3.200 12.300A6.300 6.300 0 1 1 11.800 12.300" fill="none" stroke="#8b9087" stroke-width="1.500"/><path d="M3.500 11.800l4.800-4.600" stroke="#8b9087" stroke-width="1.500"/></svg>
<svg style="left:34px;top:736.5px" width="14" height="14" viewBox="0 0 14 14"><rect x="0.900" y="0.900" width="12.200" height="12.200" rx="1.500" fill="none" stroke="#fff" stroke-width="1.800"/><path d="M1 5h12M1 9h12M8.500 9v4" stroke="#fff" stroke-width="1.600"/></svg>
<div class="t" style="left:58px;top:737px;font-size:12px;color:#f0f0f0">Registered to de jager ward</div>

 </div>
</div>
<div class="a" style="left:0px;top:991px;width:1920px;height:49px;background:#3b3f49;"></div>
<svg style="left:0px;top:991px" width="1920" height="41" viewBox="0 0 1920 41"><path d="M163 0H1584L1571 41H174z" fill="#16181b"/></svg>
<div class="a" style="left:174px;top:1032px;width:1398px;height:1.5px;background:#62666e;"></div>
<svg style="left:194px;top:999px" width="26" height="14" viewBox="0 0 26 14"><circle cx="13" cy="7" r="6.300" fill="none" stroke="#8a8e95" stroke-width="1"/><circle cx="9.500" cy="8.500" r="1" fill="#8a8e95"/><circle cx="10.500" cy="5" r="1" fill="#8a8e95"/><circle cx="13" cy="3.800" r="1" fill="#8a8e95"/><circle cx="15.500" cy="5" r="1" fill="#8a8e95"/><circle cx="16.500" cy="8.500" r="1" fill="#8a8e95"/><path d="M0 4v6l3-3zM23 4v6l3-3z" fill="#6a6e75"/></svg>
<div class="t" style="left:196px;top:1017px;font-size:11px;color:#a9aeb6">MIDI</div>
<div class="a" style="left:231px;top:999px;width:65px;height:5px;background:#3a3e46;"></div>
<div class="a" style="left:231px;top:1006px;width:65px;height:5px;background:#3a3e46;"></div>
<div class="a" style="left:231px;top:999px;width:1.5px;height:5px;background:#5ab0e0;"></div>
<div class="a" style="left:292px;top:999px;width:1px;height:5px;background:#16181b;"></div>
<div class="a" style="left:292px;top:1006px;width:1px;height:5px;background:#16181b;"></div>
<div class="t" style="left:234px;top:1016px;font-size:11px;color:#c3c8cf">Performance</div>
<svg style="left:313px;top:1001px" width="22" height="22" viewBox="0 0 22 22"><circle cx="20.80" cy="11.00" r="1.200" fill="#e8eaed"/><circle cx="19.49" cy="15.90" r="1.200" fill="#e8eaed"/><circle cx="15.90" cy="19.49" r="1.200" fill="#e8eaed"/><circle cx="11.00" cy="20.80" r="1.200" fill="#e8eaed"/><circle cx="6.10" cy="19.49" r="1.200" fill="#e8eaed"/><circle cx="2.51" cy="15.90" r="1.200" fill="#e8eaed"/><circle cx="1.20" cy="11.00" r="1.200" fill="#e8eaed"/><circle cx="2.51" cy="6.10" r="1.200" fill="#e8eaed"/><circle cx="6.10" cy="2.51" r="1.200" fill="#e8eaed"/><circle cx="11.00" cy="1.20" r="1.200" fill="#e8eaed"/><circle cx="15.90" cy="2.51" r="1.200" fill="#e8eaed"/><circle cx="19.49" cy="6.10" r="1.200" fill="#e8eaed"/></svg>
<div class="t" style="left:349px;top:999px;font-size:13px;color:#dfe2e6">44.1 kHz</div>
<div class="t" style="left:349px;top:1015px;font-size:12px;color:#dfe2e6">0.0 ms</div>
<div class="t" style="left:418px;top:999px;font-size:13px;color:#dfe2e6">14:05 days</div>
<div class="t" style="left:417px;top:1016px;font-size:11px;color:#a9aeb6">Record Max</div>
<div class="t" style="left:507px;top:999px;font-size:13px;color:#dfe2e6">00:00:24.400</div>
<div class="t" style="left:520px;top:1016px;font-size:11px;color:#a9aeb6">Seconds</div>
<div class="t" style="left:613px;top:997px;font-size:18px;font-weight:bold;color:#e6e8eb;letter-spacing:.62px">00013.01.04.20</div>
<div class="t" style="left:663px;top:1017px;font-size:11px;color:#a9aeb6">Bars</div>
<svg style="left:767px;top:1006px" width="11" height="11" viewBox="0 0 11 11"><path d="M11 0v11L0 5.500z" fill="#c9ccd1"/></svg>
<svg style="left:790px;top:1006px" width="18" height="11" viewBox="0 0 18 11"><path d="M9 0v11L0 5.500zM18 0v11L9 5.500z" fill="#c9ccd1"/></svg>
<svg style="left:821px;top:1006px" width="18" height="11" viewBox="0 0 18 11"><path d="M0 0v11L9 5.500zM9 0v11L18 5.500z" fill="#c9ccd1"/></svg>
<svg style="left:847px;top:1006px" width="11" height="11" viewBox="0 0 11 11"><path d="M0 0v11L11 5.500z" fill="#c9ccd1"/></svg>
<svg style="left:872px;top:1006px" width="13" height="11" viewBox="0 0 13 11"><path d="M0 0h1.500v11H0zM13 0v11L3 5.500z" fill="#c9ccd1"/></svg>
<div class="a" style="left:905px;top:1002px;width:20px;height:20px;background:#c9c9c9;"></div>
<svg style="left:944px;top:1002px" width="17" height="20" viewBox="0 0 17 20"><path d="M0 0v20L17 10z" fill="#78e22c"/></svg>
<svg style="left:975px;top:1002px" width="20" height="20" viewBox="0 0 20 20"><circle cx="10" cy="10" r="10" fill="#c9c9c9"/></svg>
<svg style="left:1011px;top:1002px" width="32" height="20" viewBox="0 0 32 20"><path d="M16 14c-2 3-4 4.500-8 4.500A7 7 0 0 1 8 1.500h16a7 7 0 0 1 0 17h-3" fill="none" stroke="#9b9ea4" stroke-width="2"/><path d="M16 18.500V9" stroke="#9b9ea4" stroke-width="2"/></svg>
<div class="t" style="left:1062px;top:999px;font-size:12px;color:#5f83a8;font-weight:bold">L</div>
<div class="t" style="left:1062px;top:1014px;font-size:12px;color:#5f83a8;font-weight:bold">R</div>
<div class="t" style="left:1077px;top:998px;font-size:13px;color:#dfe2e6">00001.01.01.00</div>
<div class="t" style="left:1077px;top:1013px;font-size:13px;color:#dfe2e6">00001.01.01.00</div>
<svg style="left:1190px;top:1001px" width="16" height="7" viewBox="0 0 16 7"><path d="M0 1h4l4 5h8" fill="none" stroke="#a4a7ad" stroke-width="1.200"/></svg>
<svg style="left:1217px;top:1000px" width="15" height="9" viewBox="0 0 15 9"><path d="M1 0v9M4 0v9" stroke="#a4a7ad" stroke-width="1"/><rect x="6" y="1.500" width="9" height="4.500" fill="#a4a7ad"/></svg>
<svg style="left:1246.5px;top:1000px" width="9" height="9" viewBox="0 0 9 9"><circle cx="4.500" cy="4.500" r="4.500" fill="#a4a7ad"/></svg>
<svg style="left:1266px;top:1000px" width="11" height="11" viewBox="0 0 12 12"><circle cx="3.800" cy="3.800" r="2.500" fill="none" stroke="#a4a7ad" stroke-width="1.700" stroke-dasharray="8.070 3.490 4.150 0"/><path d="M5.800 5.800L10.600 10.600" stroke="#a4a7ad" stroke-width="2.300" stroke-linecap="round"/></svg>
<svg style="left:1287px;top:999px" width="12" height="11" viewBox="0 0 12 11"><path d="M3.500 1h3l3.500 10H0z" fill="#a4a7ad"/><path d="M5 9L11 1" stroke="#a4a7ad" stroke-width="1.200"/></svg>
<svg style="left:1192px;top:1016px" width="10" height="10" viewBox="0 0 10 10"><circle cx="5" cy="5" r="2.600" fill="none" stroke="#a4a7ad" stroke-width="2"/><path d="M5 0v10M0 5h10M1.500 1.500l7 7M8.500 1.500l-7 7" stroke="#a4a7ad" stroke-width="1.300"/><circle cx="5" cy="5" r="1.300" fill="#16181b"/></svg>
<svg style="left:1215px;top:1016px" width="18" height="10" viewBox="0 0 18 10"><path d="M0 5h3M15 5h3M4 0v10M14 0v10" stroke="#a4a7ad" stroke-width="1"/><rect x="5.500" y="3" width="7" height="4" fill="#a4a7ad"/></svg>
<div class="t" style="left:1244px;top:1016px;font-size:11px;color:#a9aeb6">Metronome</div>
<div class="t" style="left:1321px;top:999px;font-size:13px;color:#dfe2e6">4 / 4</div>
<div class="t" style="left:1318px;top:1016px;font-size:11px;color:#a9aeb6">Timing</div>
<div class="t" style="left:1376px;top:999px;font-size:13px;color:#dfe2e6">-</div>
<div class="t" style="left:1369px;top:1016px;font-size:11px;color:#a9aeb6">Key</div>
<div class="t" style="left:1405px;top:999px;font-size:13px;color:#dfe2e6">120.00</div>
<div class="t" style="left:1408px;top:1016px;font-size:11px;color:#a9aeb6">Tempo</div>
<div class="a" style="left:1462px;top:999px;width:67px;height:4px;background:#44484f;"></div>
<div class="a" style="left:1462px;top:999px;width:59px;height:4px;background:#5ab0e0;"></div>
<div class="a" style="left:1462px;top:1005px;width:67px;height:3px;background:#3a3e46;"></div>
<svg style="left:1462px;top:1016px" width="68" height="9" viewBox="0 0 68 9"><rect x="0" y="0" width="1" height="9" fill="#4a9fd8"/><rect x="2" y="0" width="1" height="9" fill="#4a9fd8"/><rect x="4" y="0" width="1" height="9" fill="#4a9fd8"/><rect x="6" y="0" width="1" height="9" fill="#4a9fd8"/><rect x="8" y="0" width="1" height="9" fill="#4a9fd8"/><rect x="10" y="0" width="1" height="9" fill="#4a9fd8"/><rect x="12" y="0" width="1" height="9" fill="#4a9fd8"/><rect x="14" y="0" width="1" height="9" fill="#4a9fd8"/><rect x="16" y="0" width="1" height="9" fill="#4a9fd8"/><rect x="18" y="0" width="1" height="9" fill="#4a9fd8"/><rect x="20" y="0" width="1" height="9" fill="#4a9fd8"/><rect x="22" y="0" width="1" height="9" fill="#4a9fd8"/><rect x="24" y="0" width="1" height="9" fill="#4a9fd8"/><rect x="26" y="0" width="1" height="9" fill="#4a9fd8"/><rect x="28" y="0" width="1" height="9" fill="#4a9fd8"/><rect x="30" y="0" width="1" height="9" fill="#4a9fd8"/><rect x="32" y="0" width="1" height="9" fill="#4a9fd8"/><rect x="34" y="0" width="1" height="9" fill="#4a9fd8"/><rect x="36" y="0" width="1" height="9" fill="#4a9fd8"/><rect x="38" y="0" width="1" height="9" fill="#4a9fd8"/><rect x="40" y="0" width="1" height="9" fill="#4a9fd8"/><rect x="42" y="0" width="1" height="9" fill="#4a9fd8"/><rect x="44" y="0" width="1" height="9" fill="#4a9fd8"/><rect x="46" y="0" width="1" height="9" fill="#4a9fd8"/><rect x="48" y="0" width="1" height="9" fill="#4a9fd8"/><rect x="50" y="0" width="1" height="9" fill="#e8eaed"/><rect x="52" y="0" width="1" height="9" fill="#5a5e66"/><rect x="54" y="0" width="1" height="9" fill="#5a5e66"/><rect x="56" y="0" width="1" height="9" fill="#5a5e66"/><rect x="58" y="0" width="1" height="9" fill="#5a5e66"/><rect x="60" y="0" width="1" height="9" fill="#5a5e66"/><rect x="62" y="0" width="1" height="9" fill="#5a5e66"/><rect x="64" y="0" width="1" height="9" fill="#5a5e66"/><rect x="66" y="0" width="1" height="9" fill="#5a5e66"/></svg>
<svg style="left:1536px;top:1016px" width="16" height="9" viewBox="0 0 16 9"><rect x="0" y="0" width="16" height="9" rx="4.500" fill="#3b9be0"/><circle cx="11.500" cy="4.500" r="2.700" fill="#16181b" stroke="#fff" stroke-width="1.300"/></svg>
<div class="a" style="left:1742px;top:991px;width:1px;height:45px;background:#2f333b;"></div>
<div class="t" style="left:1743px;top:1010px;width:55px;text-align:center;font-size:12.500px;color:#d4d8de">Edit</div>
<div class="a" style="left:1799px;top:991px;width:55px;height:44px;background:#2492dc;"></div>
<div class="a" style="left:1854px;top:991px;width:2px;height:44px;background:#1b5f92;"></div>
<div class="a" style="left:1856px;top:991px;width:64px;height:44px;background:#2492dc;"></div>
<div class="t" style="left:1799px;top:1010px;width:55px;text-align:center;font-size:12.500px;color:#e8f2fb">Mix</div>
<div class="t" style="left:1856px;top:1010px;width:64px;text-align:center;font-size:12.500px;color:#e8f2fb">Browse</div>

</body>
</html>
